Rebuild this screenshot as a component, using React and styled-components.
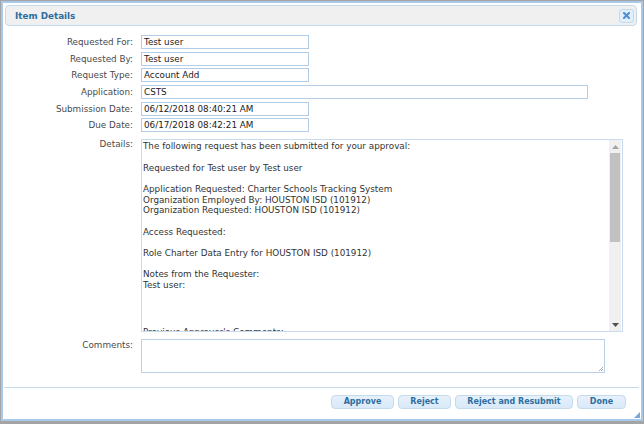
import React from 'react';
import styled, { createGlobalStyle } from 'styled-components';

const Global = createGlobalStyle`
  html, body { margin: 0; padding: 0; }
  body {
    background: #a4a4a4;
    width: 644px;
    height: 424px;
    overflow: hidden;
    font-family: "DejaVu Sans", Verdana, sans-serif;
  }
`;

const Dialog = styled.div`
  position: relative;
  box-sizing: border-box;
  margin: 1px 1px 0 1px;
  width: 642px;
  height: 420px;
  border: 2px solid #a9c9ea;
  background: #fff;
  display: flex;
  flex-direction: column;
`;

const TitleBar = styled.div`
  box-sizing: border-box;
  margin: 2px 4px 0 2px;
  height: 21px;
  border: 1px solid #c5dbec;
  border-radius: 4px;
  background: #f0f0f0;
  display: flex;
  align-items: center;
  justify-content: space-between;
  padding: 0 2px 0 9px;
`;

const Title = styled.span`
  font-weight: bold;
  font-size: 8.8px;
  color: #2e6e9e;
`;

const CloseButton = styled.div`
  box-sizing: border-box;
  width: 15px;
  height: 14px;
  border: 1px solid #c5dbec;
  border-radius: 3px;
  background: #dfeffc;
  display: flex;
  align-items: center;
  justify-content: center;
`;

const Form = styled.div`
  margin-top: 9px;
  display: grid;
  grid-template-columns: 130px 1fr;
  column-gap: 8px;
  row-gap: 2.67px;
  align-items: start;
`;

const Label = styled.div`
  text-align: right;
  white-space: nowrap;
  font-size: 8.8px;
  line-height: ${p => p.$lh || '14px'};
  color: #4a4a4a;
  margin-top: ${p => p.$mt || '0'};
`;

const Field = styled.div`
  box-sizing: border-box;
  width: ${p => p.$w}px;
  height: 14px;
  border: 1px solid #b4cde6;
  padding: 0 2px;
  font-size: 8.8px;
  line-height: 12px;
  color: #222;
  white-space: nowrap;
  overflow: hidden;
`;

const DetailsBox = styled.div`
  box-sizing: border-box;
  width: 482px;
  height: 193px;
  border: 1px solid #c9dbee;
  display: flex;
  margin-top: 4.33px;
`;

const DetailsText = styled.div`
  flex: 1;
  overflow: hidden;
  padding: 1px 2px 0 1px;
  white-space: pre;
  font-size: 8.8px;
  line-height: 10.67px;
  color: #333;
`;

const TrailingLine = styled.div`
  margin-top: 15px;
`;

const Scrollbar = styled.div`
  width: 12px;
  margin-right: 1px;
  background: #f0f0f0;
  display: flex;
  flex-direction: column;
`;

const ArrowCell = styled.div`
  height: 13px;
  display: flex;
  align-items: center;
  justify-content: center;
`;

const Track = styled.div`
  flex: 1;
  display: flex;
  flex-direction: column;
  align-items: center;
`;

const Thumb = styled.div`
  width: 10px;
  height: 89px;
  background: #c1c1c1;
`;

const CommentsBox = styled.div`
  position: relative;
  box-sizing: border-box;
  width: 464px;
  height: 34px;
  border: 1px solid #b9d0e7;
  margin-top: 4.33px;
`;

const Grip = styled.svg`
  position: absolute;
  right: 1px;
  bottom: 1px;
`;

const Footer = styled.div`
  margin: 14px 2px 0 1px;
  border-top: 1px solid #c5dbec;
  padding: 7px 13px 0 0;
  display: flex;
  justify-content: flex-end;
  gap: 4px;
`;

const Button = styled.div`
  box-sizing: border-box;
  width: ${p => p.$w}px;
  height: 14px;
  border: 1px solid #c5dbec;
  border-radius: 4px;
  background: linear-gradient(#e6f1fb, #d9e9f8);
  color: #2e6e9e;
  font-weight: bold;
  font-size: 8px;
  line-height: 12px;
  text-align: center;
  white-space: nowrap;
`;

const ResizeGrip = styled.svg`
  position: absolute;
  right: 1px;
  bottom: 1px;
`;

const detailsText = [
  'The following request has been submitted for your approval:',
  '',
  'Requested for Test user by Test user',
  '',
  'Application Requested: Charter Schools Tracking System',
  'Organization Employed By: HOUSTON ISD (101912)',
  'Organization Requested: HOUSTON ISD (101912)',
  '',
  'Access Requested:',
  '',
  'Role Charter Data Entry for HOUSTON ISD (101912)',
  '',
  'Notes from the Requester:',
  'Test user:',
  '',
  '',
  '',
].join('\n');

const fields = [
  ['Requested For:', 'Test user', 168],
  ['Requested By:', 'Test user', 168],
  ['Request Type:', 'Account Add', 168],
  ['Application:', 'CSTS', 447],
  ['Submission Date:', '06/12/2018 08:40:21 AM', 168],
  ['Due Date:', '06/17/2018 08:42:21 AM', 168],
];

const buttons = [
  ['Approve', 63],
  ['Reject', 53],
  ['Reject and Resubmit', 118],
  ['Done', 49],
];

export default function App() {
  return (
    <>
      <Global />
      <Dialog>
        <TitleBar>
          <Title>Item Details</Title>
          <CloseButton>
            <svg width="7" height="7" viewBox="0 0 7 7">
              <path d="M1 1L6 6M6 1L1 6" stroke="#4f8fcf" strokeWidth="2" strokeLinecap="square" />
            </svg>
          </CloseButton>
        </TitleBar>
        <Form>
          {fields.map(([l, v, w]) => (
            <React.Fragment key={l}>
              <Label>{l}</Label>
              <Field $w={w}>{v}</Field>
            </React.Fragment>
          ))}
          <Label $lh="10.67px" $mt="4.33px">Details:</Label>
          <DetailsBox>
            <DetailsText>
              {detailsText}
              <TrailingLine>Previous Approver's Comments:</TrailingLine>
            </DetailsText>
            <Scrollbar>
              <ArrowCell>
                <svg width="7" height="4" viewBox="0 0 7 4"><path d="M0 4L3.5 0L7 4Z" fill="#a3a3a3" /></svg>
              </ArrowCell>
              <Track><Thumb /></Track>
              <ArrowCell>
                <svg width="7" height="4" viewBox="0 0 7 4"><path d="M0 0L3.5 4L7 0Z" fill="#505050" /></svg>
              </ArrowCell>
            </Scrollbar>
          </DetailsBox>
          <Label $lh="12px" $mt="4.33px">Comments:</Label>
          <CommentsBox>
            <Grip width="5" height="5" viewBox="0 0 5 5">
              <path d="M1 5L5 1M3 5L5 3" stroke="#9a9a9a" strokeWidth="0.8" />
            </Grip>
          </CommentsBox>
        </Form>
        <Footer>
          {buttons.map(([t, w]) => (
            <Button key={t} $w={w}>{t}</Button>
          ))}
        </Footer>
        <ResizeGrip width="6" height="6" viewBox="0 0 6 6">
          <path d="M6 0L6 6L0 6Z" fill="#7aa7d6" />
        </ResizeGrip>
      </Dialog>
    </>
  );
}
